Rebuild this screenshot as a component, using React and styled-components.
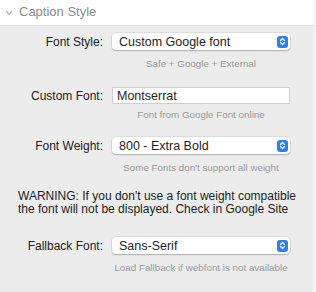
import React from "react";
import styled, { createGlobalStyle } from "styled-components";

const Global = createGlobalStyle`
  html, body { margin: 0; padding: 0; background: #f1f1f1; }
  body { font-family: "Liberation Sans", Arial, sans-serif; -webkit-font-smoothing: antialiased; }
  * { box-sizing: border-box; }
`;

const Frame = styled.div`
  width: 316px;
  height: 292px;
  display: flex;
  background: #f3f3f3;
  overflow: hidden;
`;

const Panel = styled.div`
  width: 313px;
  display: flex;
  flex-direction: column;
  background: #ececec;
`;

const Header = styled.div`
  height: 26px;
  background: #ffffff;
  border-bottom: 1px solid #e0e0e0;
  display: flex;
  align-items: center;
  padding-left: 5px;
  gap: 6px;
`;

const Title = styled.span`
  font-size: 13px;
  color: #8b8b8b;
  line-height: 16px;
  margin-top: -1px;
`;

const Body = styled.div`
  display: flex;
  flex-direction: column;
  padding-top: 7px;
`;

const Row = styled.div`
  display: grid;
  grid-template-columns: 103px 178px;
  column-gap: 9px;
  align-items: center;
  margin-top: ${(p) => p.$mt || 0}px;
`;

const Label = styled.div`
  text-align: right;
  font-size: 12px;
  color: #222;
  line-height: 14px;
`;

const SelectBox = styled.div`
  height: 17px;
  background: #fff;
  border-radius: 4px;
  box-shadow: 0 0 0 0.5px rgba(0,0,0,0.12), 0 1px 1.5px rgba(0,0,0,0.22);
  display: flex;
  align-items: center;
  justify-content: space-between;
  padding: 0 2px 0 7px;
  font-size: 12.5px;
  color: #1e1e1e;
`;

const Stepper = styled.div`
  width: 11px;
  height: 12px;
  border-radius: 3px;
  background: #2a7ff5;
  display: flex;
  align-items: center;
  justify-content: center;
`;

const InputBox = styled.div`
  height: 17px;
  background: #fff;
  border: 1px solid #cfcfcf;
  display: flex;
  align-items: center;
  padding-left: 4px;
  font-size: 12.5px;
  color: #1e1e1e;
`;

const Hint = styled.div`
  margin-left: 112px;
  width: 178px;
  text-align: center;
  font-size: 9.8px;
  line-height: 12px;
  color: #9a9a9a;
  white-space: nowrap;
  margin-top: ${(p) => p.$mt || 0}px;
`;

const Warning = styled.div`
  padding-left: 18px;
  font-size: 12px;
  line-height: 13px;
  color: #1e1e1e;
  margin-top: ${(p) => p.$mt || 0}px;
`;

const Chevron = () => (
  <svg width="8" height="6" viewBox="0 0 8 6">
    <polyline points="1,1 4,4.5 7,1" fill="none" stroke="#b3b3b3" strokeWidth="1.2" />
  </svg>
);

const StepIcon = () => (
  <Stepper>
    <svg width="7" height="9" viewBox="0 0 7 9">
      <polyline points="1.5,3.5 3.5,1.5 5.5,3.5" fill="none" stroke="#fff" strokeWidth="1.2" strokeLinecap="round" strokeLinejoin="round" />
      <polyline points="1.5,5.5 3.5,7.5 5.5,5.5" fill="none" stroke="#fff" strokeWidth="1.2" strokeLinecap="round" strokeLinejoin="round" />
    </svg>
  </Stepper>
);

const Select = ({ value }) => (
  <SelectBox>
    <span>{value}</span>
    <StepIcon />
  </SelectBox>
);

export default function App() {
  return (
    <>
      <Global />
      <Frame>
        <Panel>
          <Header>
            <Chevron />
            <Title>Caption Style</Title>
          </Header>
          <Body>
            <Row>
              <Label>Font Style:</Label>
              <Select value="Custom Google font" />
            </Row>
            <Hint $mt={8}>Safe + Google + External</Hint>
            <Row $mt={17}>
              <Label>Custom Font:</Label>
              <InputBox>Montserrat</InputBox>
            </Row>
            <Hint $mt={5}>Font from Google Font online</Hint>
            <Row $mt={16}>
              <Label>Font Weight:</Label>
              <Select value="800 - Extra Bold" />
            </Row>
            <Hint $mt={8}>Some Fonts don't support all weight</Hint>
            <Warning $mt={16}>
              WARNING: If you don't use a font weight compatible
              <br />
              the font will not be displayed. Check in Google Site
            </Warning>
            <Row $mt={21}>
              <Label>Fallback Font:</Label>
              <Select value="Sans-Serif" />
            </Row>
            <Hint $mt={8}>Load Fallback if webfont is not available</Hint>
          </Body>
        </Panel>
      </Frame>
    </>
  );
}
